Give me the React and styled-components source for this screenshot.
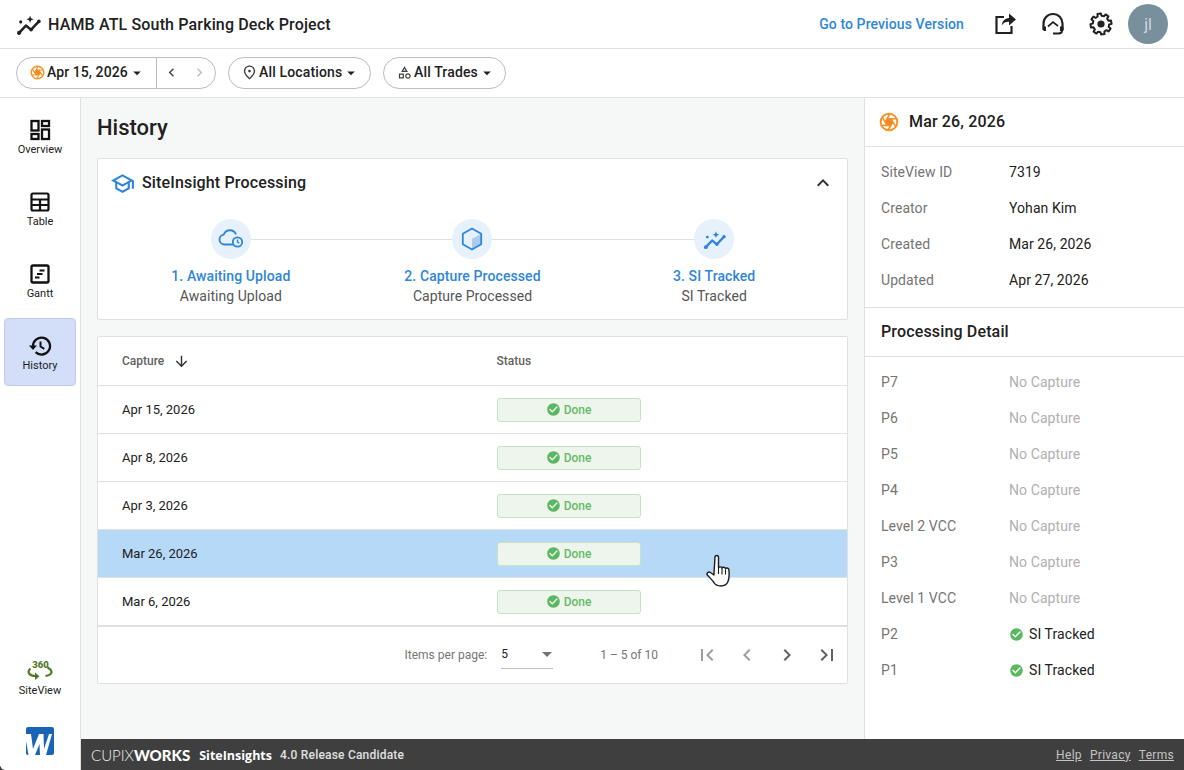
import React from 'react';
import styled, { createGlobalStyle } from 'styled-components';
import {
  MdOutlineSchool, MdOutlinePlace, MdOutlineCategory, MdCheckCircle, MdFirstPage, MdLastPage,
  MdChevronLeft, MdChevronRight, MdArrowDownward, MdExpandLess, MdArrowDropDown,
} from 'react-icons/md';

const Global = createGlobalStyle`
  html, body { margin: 0; padding: 0; height: 100%; background: #3f3f3f; }
  body { font-family: Roboto, "Liberation Sans", sans-serif; color: #212121; overflow: hidden; }
  * { box-sizing: border-box; }
`;

const Page = styled.div`
  width: 1184px; height: 770px; display: flex; flex-direction: column;
  background: #fff; border-bottom-left-radius: 6px; overflow: hidden;
`;
const Header = styled.header`
  height: 49px; flex: none; display: flex; align-items: center; padding: 0 16px;
  border-bottom: 1px solid #e0e0e0; background: #fff;
`;
const ProjectTitle = styled.h1`
  margin: 0 0 0 7px; font-size: 16px; font-weight: 500; color: #212121; flex: 1; letter-spacing: 0.15px;
`;
const VersionLink = styled.a`
  font-size: 14px; font-weight: 500; color: #2f86d8; margin-right: 17px; letter-spacing: 0.1px;
`;
const HeadIcon = styled.span`
  width: 48px; height: 48px; display: flex; align-items: center; justify-content: center; color: #212121;
`;
const Avatar = styled.div`
  width: 40px; height: 40px; border-radius: 50%; background: #78909c; color: #cfd8dc;
  display: flex; align-items: center; justify-content: center; font-size: 16px; margin-left: 3px;
`;
const FilterBar = styled.div`
  height: 49px; flex: none; display: flex; align-items: center; gap: 12px; padding: 0 16px 1px;
  border-bottom: 1px solid #e0e0e0; background: #fff;
`;
const Pill = styled.div`
  height: 32px; display: flex; align-items: center; border: 1px solid #bdbdbd; border-radius: 16px;
  font-size: 14px; font-weight: 500; color: #212121; width: ${p => p.$w}px; padding-left: ${p => p.$pl || 0}px;
`;
const PillLabel = styled.span`
  margin: 0 0 2px ${p => p.$ml || 2}px; white-space: nowrap; letter-spacing: ${p => p.$ls || 0.15}px;
`;
const DatePart = styled.div`
  width: 140px; height: 100%; display: flex; align-items: center; padding-left: 13px; border-right: 1px solid #bdbdbd;
`;
const NavPart = styled.div`
  flex: 1; display: flex; align-items: center; padding-left: 6px; gap: 11px;
`;
const Body = styled.div`
  flex: 1; display: flex; min-height: 0;
`;
const Sidebar = styled.nav`
  width: 81px; flex: none; display: flex; flex-direction: column; gap: 4px; padding: 4px;
  border-right: 1px solid #e0e0e0; background: #fff;
`;
const NavItem = styled.div`
  width: 72px; height: 68px; flex: none; display: flex; flex-direction: column; align-items: center; justify-content: center;
  border-radius: 4px; font-size: 11px; line-height: 13px; color: #212121; gap: 1px; padding-top: ${p => (p.$pushed ? 0 : 2)}px;
  background: ${p => (p.$active ? '#d3def9' : 'transparent')};
  border: 1px solid ${p => (p.$active ? '#c0cdea' : 'transparent')};
  margin-top: ${p => (p.$pushed ? 'auto' : '0')};
`;
const LogoSlot = styled.div`
  height: 49px; flex: none; display: flex; justify-content: center; align-items: flex-start; padding-top: 10px; margin-top: 1px;
`;
const Right = styled.div`
  flex: 1; display: flex; flex-direction: column; min-width: 0;
`;
const Columns = styled.div`
  flex: 1; display: flex; min-height: 0;
`;
const Main = styled.main`
  width: 784px; flex: none; background: #f6f8f8; padding: 16px 16px 0; border-right: 1px solid #e0e0e0;
`;
const Heading = styled.h2`
  margin: 0 0 16px; font-size: 22px; line-height: 28px; font-weight: 500; color: #212121; height: 28px;
`;
const Card = styled.section`
  width: 751px; background: #fff; border: 1px solid #e0e0e0; border-radius: 2px;
`;
const ProcessCard = styled(Card)`
  height: 162px; margin-bottom: 16px; padding: 0 12px;
`;
const CardHead = styled.div`
  height: 48px; display: flex; align-items: center; font-size: 16px; font-weight: 500; color: #212121; gap: 7px;
`;
const CardTitle = styled.span`
  flex: 1; letter-spacing: 0.15px; margin-bottom: 2px;
`;
const Steps = styled.div`
  display: grid; grid-template-columns: repeat(3, 1fr); margin-top: 12px;
`;
const Step = styled.div`
  position: relative; display: flex; flex-direction: column; align-items: center; font-size: 14px; line-height: 20px;
  &:not(:last-child)::after {
    content: ''; position: absolute; top: 20px; left: 50%; width: 100%; height: 1px; background: #e0e0e0;
  }
`;
const StepIcon = styled.div`
  position: relative; z-index: 1; width: 40px; height: 40px; border-radius: 50%; background: #e6f1fb; color: #2f86d8;
  display: flex; align-items: center; justify-content: center; margin-bottom: 7px;
`;
const StepTitle = styled.div`
  font-weight: 500; color: #2f86d8; letter-spacing: 0.1px;
`;
const StepSub = styled.div`
  color: #555; letter-spacing: 0.05px;
`;
const TableCard = styled(Card)`
  height: 348px;
`;
const Row = styled.div`
  height: 48px; display: grid; grid-template-columns: 1fr 1fr; align-items: center; padding: 0;
  border-bottom: 1px solid #e0e0e0; font-size: 13px; color: #212121;
  background: ${p => (p.$selected ? '#b6d9f7' : '#fff')};
`;
const HeadRow = styled(Row)`
  height: 49px; font-size: 12px; font-weight: 500; color: #616161;
`;
const Cell = styled.div`
  padding-left: 24px; display: flex; align-items: center; gap: 5px;
`;
const Badge = styled.div`
  width: 144px; height: 24px; display: flex; align-items: center; justify-content: center; gap: 3px;
  background: #edf5ec; border: 1px solid #c4e3c5; border-radius: 3px; color: #66bb6a; font-size: 12px; font-weight: 500;
`;
const Pager = styled.div`
  height: 58px; display: flex; align-items: center; justify-content: flex-end; font-size: 12px; color: #757575;
  border-top: 1px solid #e0e0e0; padding-bottom: 2px;
`;
const PerPage = styled.div`
  width: 52px; height: 28px; margin: 0 47px 0 14px; border-bottom: 1px solid #bdbdbd; display: flex; align-items: center;
  justify-content: space-between; color: #212121;
`;
const Range = styled.div`
  margin-right: 29px;
`;
const PageBtn = styled.div`
  width: 40px; height: 40px; display: flex; align-items: center; justify-content: center;
  color: ${p => (p.$off ? '#9e9e9e' : '#616161')};
`;
const Detail = styled.aside`
  flex: 1; background: #fff; min-width: 0;
`;
const DetailHead = styled.div`
  height: 49px; display: flex; align-items: center; gap: 10px; padding: 0 14px; font-size: 16px; font-weight: 500;
  border-bottom: 1px solid #e0e0e0;
`;
const HeadText = styled.span`
  letter-spacing: 0.15px; margin-bottom: 2px;
`;
const Section = styled.div`
  padding: 7px 16px 9px; border-bottom: ${p => (p.$noBorder ? 'none' : '1px solid #e0e0e0')};
`;
const SectionHead = styled.div`
  height: 49px; display: flex; align-items: center; padding: 0 16px; font-size: 16px; font-weight: 500;
  border-bottom: 1px solid #e0e0e0;
`;
const DetailRow = styled.div`
  height: 36px; display: grid; grid-template-columns: 128px 1fr; align-items: center; font-size: 14px; letter-spacing: 0.08px;
`;
const DetailKey = styled.span`
  color: #757575;
`;
const DetailValue = styled.span`
  color: ${p => (p.$muted ? '#b0b0b0' : '#212121')}; display: flex; align-items: center; gap: 5px;
`;
const Footer = styled.footer`
  height: 31px; flex: none; background: #3f3f3f; color: #e0e0e0; display: flex; align-items: center;
  padding: 0 10px 0 10px; font-size: 12px;
`;
const Brand = styled.span`
  font-family: Lato, "Open Sans", sans-serif; font-size: 15px; font-weight: 300; color: #f0f0f0; letter-spacing: 0;
`;
const BrandStrong = styled.b`
  font-weight: 900; color: #fff;
`;
const Product = styled.span`
  font-family: "Open Sans", sans-serif; font-size: 12.5px; font-weight: 700; color: #fff; margin: 1px 8px 0 9px;
`;
const Release = styled.span`
  flex: 1; font-weight: 500; letter-spacing: 0.2px;
`;
const FootLink = styled.a`
  color: #c4c4c4; text-decoration: underline; margin-left: 8px; letter-spacing: 0.3px;
`;
const CursorWrap = styled.div`
  position: absolute; left: 706px; top: 554px; width: 30px; height: 36px; z-index: 5;
`;
const Shell = styled.div`
  position: relative;
`;

const ShareIcon = () => (
  <svg width="24" height="24" viewBox="0 0 24 24" fill="none">
    <path d="M11 5H3.500v16h15v-7" stroke="#212121" strokeWidth="2.200" />
    <path d="M16 1.500l7 6-7 6V9.800c-3.400 0-5.600 1-7.300 3.600.5-4.100 3-7 7.300-7.400V1.500z" fill="#212121" />
  </svg>
);
const SupportIcon = () => (
  <svg width="24" height="24" viewBox="0 0 24 24" fill="none" stroke="#212121" strokeWidth="2.200">
    <path d="M2.500 18v-6.500a9.500 9.500 0 0 1 19 0V18" />
    <path d="M1.500 14.500h3.500v4.500H2.500zM19 14.500h3.500v4.500H19z" fill="#212121" stroke="none" />
    <path d="M7 14.500l5-4.500 5 4" strokeWidth="1.700" />
    <path d="M21 18.500c0 2-1 3-3.500 3H12" strokeWidth="2" />
  </svg>
);
const gearPath = (() => {
  const pts = [];
  for (let i = 0; i < 8; i += 1) {
    const a = (i * Math.PI) / 4 - Math.PI / 8;
    const step = Math.PI / 4;
    [[8.2, -0.06], [10.6, 0.12], [10.6, 0.88], [8.2, 1.06]].forEach(([r, f]) => {
      const t = a + f * step * 0.55;
      pts.push(`${(12 + r * Math.cos(t)).toFixed(2)} ${(12 + r * Math.sin(t)).toFixed(2)}`);
    });
  }
  return `M${pts.join('L')}Z`;
})();
const GearIcon = () => (
  <svg width="24" height="24" viewBox="0 0 24 24" fill="none">
    <path d={gearPath} stroke="#212121" strokeWidth="2" strokeLinejoin="round" />
    <circle cx="12" cy="12" r="3.600" fill="#212121" />
  </svg>
);
const GraphIcon = ({ color = '#212121', size = 24 }) => (
  <svg width={size} height={size} viewBox="0 0 24 24" fill="none">
    <path d="M2.500 20.500L9.500 13l5 4 7.500-8" stroke={color} strokeWidth="2.400" strokeLinecap="round" strokeLinejoin="round" />
    <circle cx="3" cy="20" r="2" fill={color} />
    <circle cx="14.500" cy="17" r="1.700" fill={color} />
    <circle cx="22" cy="9" r="1.700" fill={color} />
    <circle cx="4.500" cy="9.500" r="1.500" fill={color} />
    <path d="M13.500 3.500l1 2.500 2.500 1-2.500 1-1 2.500-1-2.500L10 7l2.500-1z" fill={color} />
  </svg>
);
const DashIcon = () => (
  <svg width="24" height="24" viewBox="0 0 24 24" fill="none" stroke="#111" strokeWidth="2.300">
    <rect x="3.500" y="3" width="7" height="9.500" />
    <rect x="3.500" y="16" width="7" height="5" />
    <rect x="14" y="3" width="7" height="5" />
    <rect x="14" y="11.500" width="7" height="9.500" />
  </svg>
);
const TableIcon = () => (
  <svg width="24" height="24" viewBox="0 0 24 24" fill="none" stroke="#111" strokeWidth="2.200">
    <rect x="3.500" y="3.500" width="17" height="17" rx="1.500" />
    <path d="M3.500 9.500h17M3.500 15h17M12 9.500v11" />
  </svg>
);
const GanttIcon = () => (
  <svg width="24" height="24" viewBox="0 0 24 24" fill="none" stroke="#111" strokeWidth="2.300">
    <rect x="3.500" y="3.500" width="17" height="17" rx="1.500" />
    <path d="M11.500 8.500h5M9 12h5.500M7 15.500h4.500" strokeWidth="1.900" />
  </svg>
);
const HistoryIcon = () => (
  <svg width="24" height="24" viewBox="0 0 24 24" fill="none" stroke="#111" strokeWidth="2.300">
    <path d="M5 12a8.500 8.500 0 1 1 2.600 6.200" />
    <path d="M1 11.500h8L5 16z" fill="#111" stroke="none" />
    <path d="M12.500 7.500V12.500l3.800 2.400" strokeWidth="2" />
  </svg>
);
const ShutterIcon = ({ size }) => (
  <svg width={size} height={size} viewBox="0 0 24 24" fill="none" stroke="#f5912a" strokeWidth="2.300">
    <circle cx="12" cy="12" r="10" />
    <path d="M14.300 8L20 17.500M9.700 8h11.500M7.400 12l5.800-9.900M9.700 16L4 6.500M14.300 16H2.800M16.600 12l-5.800 9.900" strokeWidth="1.900" />
    <path d="M14.300 8l2.300 4-2.300 4H9.700l-2.300-4 2.300-4z" fill="#f58a1c" stroke="none" />
  </svg>
);
const Cloud = () => (
  <svg width="26" height="22" viewBox="0 0 26 22" fill="none" stroke="#2f86d8" strokeWidth="1.800">
    <path d="M15.500 16.500H6.500a5 5 0 0 1-.7-9.950A6.500 6.500 0 0 1 18 6.500" />
    <circle cx="19.500" cy="14" r="4.700" />
    <path d="M19.500 11.500V14l1.800 1.300" strokeWidth="1.400" />
  </svg>
);
const Hex = () => (
  <svg width="22" height="24" viewBox="0 0 22 24" fill="none">
    <path d="M11 12l9.200-5.300v10.600L11 22.600z" fill="#a9cdf0" />
    <path d="M11 1.500l9.200 5.250v10.500L11 22.500l-9.200-5.250V6.750z" stroke="#2f86d8" strokeWidth="1.800" />
  </svg>
);
const View360 = () => (
  <svg width="28" height="24" viewBox="0 0 28 24" fill="none">
    <text x="14.500" y="9" textAnchor="middle" fontFamily="Roboto, sans-serif" fontWeight="900" fontSize="9.500" fill="#4e7a27">360</text>
    <path d="M4.500 9.500C2 11.500 2 14 4 15.500c1.300 1 3 1.500 5.500 1.700" stroke="#4e7a27" strokeWidth="2.200" />
    <path d="M9 13.500l4.500 3.700L9 21z" fill="#4e7a27" />
    <path d="M21.500 8.500c3 1.500 5 3.500 3.500 6-.8 1.200-2.500 2-5.500 2.500" stroke="#4e7a27" strokeWidth="2.200" />
  </svg>
);
const WordLogo = () => (
  <svg width="28" height="28" viewBox="0 0 28 28">
    <rect width="28" height="28" rx="2" fill="#1a64b6" />
    <path d="M0 7h5l2 15L13 7h4.500l.5 15L23 7h3L20 28h-6l-.5-11L9 28H2.500L0 14z" fill="#fff" />
  </svg>
);
const HandCursor = () => (
  <svg width="30" height="36" viewBox="0 0 30 36">
    <path d="M9 3c0-2 3.500-2 3.500 0v11c0-1.500 3.500-1.500 3.500.3 0-1.500 3.300-1.500 3.500.5.200-1.300 3.200-1.200 3.400 1 .5 5 .3 9-1 12-1 2.500-3 4.200-7 4.200-3 0-5.500-1-7-3.500-2-3-4.500-5-6.500-7.500-1.200-1.500.8-3.800 3-2.500l3.500 2.500z"
      fill="#fff" stroke="#1b1b1b" strokeWidth="1.400" strokeLinejoin="round" />
    <path d="M12.500 14v6M16 14.500v6M19.500 15.500v5" stroke="#1b1b1b" strokeWidth="1.100" />
  </svg>
);
const DoneCheck = ({ size = 16 }) => <MdCheckCircle size={size} color="#5cb860" />;

const captures = ['Apr 15, 2026', 'Apr 8, 2026', 'Apr 3, 2026', 'Mar 26, 2026', 'Mar 6, 2026'];
const meta = [['SiteView ID', '7319'], ['Creator', 'Yohan Kim'], ['Created', 'Mar 26, 2026'], ['Updated', 'Apr 27, 2026']];
const levels = [
  ['P7', false], ['P6', false], ['P5', false], ['P4', false], ['Level 2 VCC', false],
  ['P3', false], ['Level 1 VCC', false], ['P2', true], ['P1', true],
];

export default function App() {
  return (
    <Shell>
      <Global />
      <Page>
        <Header>
          <GraphIcon size={25} />
          <ProjectTitle>HAMB ATL South Parking Deck Project</ProjectTitle>
          <VersionLink>Go to Previous Version</VersionLink>
          <HeadIcon><ShareIcon /></HeadIcon>
          <HeadIcon><SupportIcon /></HeadIcon>
          <HeadIcon><GearIcon /></HeadIcon>
          <Avatar>jl</Avatar>
        </Header>
        <FilterBar>
          <Pill $w={200}>
            <DatePart>
              <ShutterIcon size={15} />
              <PillLabel $ls={0.08}>Apr 15, 2026</PillLabel>
              <MdArrowDropDown size={18} />
            </DatePart>
            <NavPart>
              <MdChevronLeft size={17} color="#424242" />
              <MdChevronRight size={17} color="#bdbdbd" />
            </NavPart>
          </Pill>
          <Pill $w={143} $pl={12}>
            <MdOutlinePlace size={17} color="#424242" />
            <PillLabel $ml={1}>All Locations</PillLabel>
            <MdArrowDropDown size={18} />
          </Pill>
          <Pill $w={123} $pl={13}>
            <MdOutlineCategory size={15} color="#424242" />
            <PillLabel>All Trades</PillLabel>
            <MdArrowDropDown size={18} />
          </Pill>
        </FilterBar>
        <Body>
          <Sidebar>
            <NavItem><DashIcon />Overview</NavItem>
            <NavItem><TableIcon />Table</NavItem>
            <NavItem><GanttIcon />Gantt</NavItem>
            <NavItem $active><HistoryIcon />History</NavItem>
            <NavItem $pushed><View360 />SiteView</NavItem>
            <LogoSlot><WordLogo /></LogoSlot>
          </Sidebar>
          <Right>
            <Columns>
              <Main>
                <Heading>History</Heading>
                <ProcessCard>
                  <CardHead>
                    <MdOutlineSchool size={25} color="#2f86d8" />
                    <CardTitle>SiteInsight Processing</CardTitle>
                    <MdExpandLess size={24} color="#333" />
                  </CardHead>
                  <Steps>
                    <Step>
                      <StepIcon><Cloud /></StepIcon>
                      <StepTitle>1. Awaiting Upload</StepTitle>
                      <StepSub>Awaiting Upload</StepSub>
                    </Step>
                    <Step>
                      <StepIcon><Hex /></StepIcon>
                      <StepTitle>2. Capture Processed</StepTitle>
                      <StepSub>Capture Processed</StepSub>
                    </Step>
                    <Step>
                      <StepIcon><GraphIcon color="#2f86d8" size={23} /></StepIcon>
                      <StepTitle>3. SI Tracked</StepTitle>
                      <StepSub>SI Tracked</StepSub>
                    </Step>
                  </Steps>
                </ProcessCard>
                <TableCard>
                  <HeadRow>
                    <Cell>Capture <MdArrowDownward size={17} color="#333" style={{ marginLeft: 4 }} /></Cell>
                    <Cell>Status</Cell>
                  </HeadRow>
                  {captures.map((c, i) => (
                    <Row key={c} $selected={i === 3}>
                      <Cell>{c}</Cell>
                      <Cell><Badge><DoneCheck size={15} /> Done</Badge></Cell>
                    </Row>
                  ))}
                  <Pager>
                    Items per page:
                    <PerPage>5 <MdArrowDropDown size={24} color="#757575" style={{ marginRight: -6 }} /></PerPage>
                    <Range>1 – 5 of 10</Range>
                    <PageBtn $off><MdFirstPage size={24} /></PageBtn>
                    <PageBtn $off><MdChevronLeft size={24} /></PageBtn>
                    <PageBtn><MdChevronRight size={24} /></PageBtn>
                    <PageBtn><MdLastPage size={24} /></PageBtn>
                  </Pager>
                </TableCard>
              </Main>
              <Detail>
                <DetailHead>
                  <ShutterIcon size={20} />
                  <HeadText>Mar 26, 2026</HeadText>
                </DetailHead>
                <Section>
                  {meta.map(([k, v]) => (
                    <DetailRow key={k}><DetailKey>{k}</DetailKey><DetailValue>{v}</DetailValue></DetailRow>
                  ))}
                </Section>
                <SectionHead><HeadText>Processing Detail</HeadText></SectionHead>
                <Section $noBorder>
                  {levels.map(([k, done]) => (
                    <DetailRow key={k}>
                      <DetailKey>{k}</DetailKey>
                      {done
                        ? <DetailValue><DoneCheck size={15} />SI Tracked</DetailValue>
                        : <DetailValue $muted>No Capture</DetailValue>}
                    </DetailRow>
                  ))}
                </Section>
              </Detail>
            </Columns>
            <Footer>
              <Brand>CUPIX<BrandStrong>WORKS</BrandStrong></Brand>
              <Product>SiteInsights</Product>
              <Release>4.0 Release Candidate</Release>
              <FootLink>Help</FootLink>
              <FootLink>Privacy</FootLink>
              <FootLink>Terms</FootLink>
            </Footer>
          </Right>
        </Body>
      </Page>
      <CursorWrap><HandCursor /></CursorWrap>
    </Shell>
  );
}
